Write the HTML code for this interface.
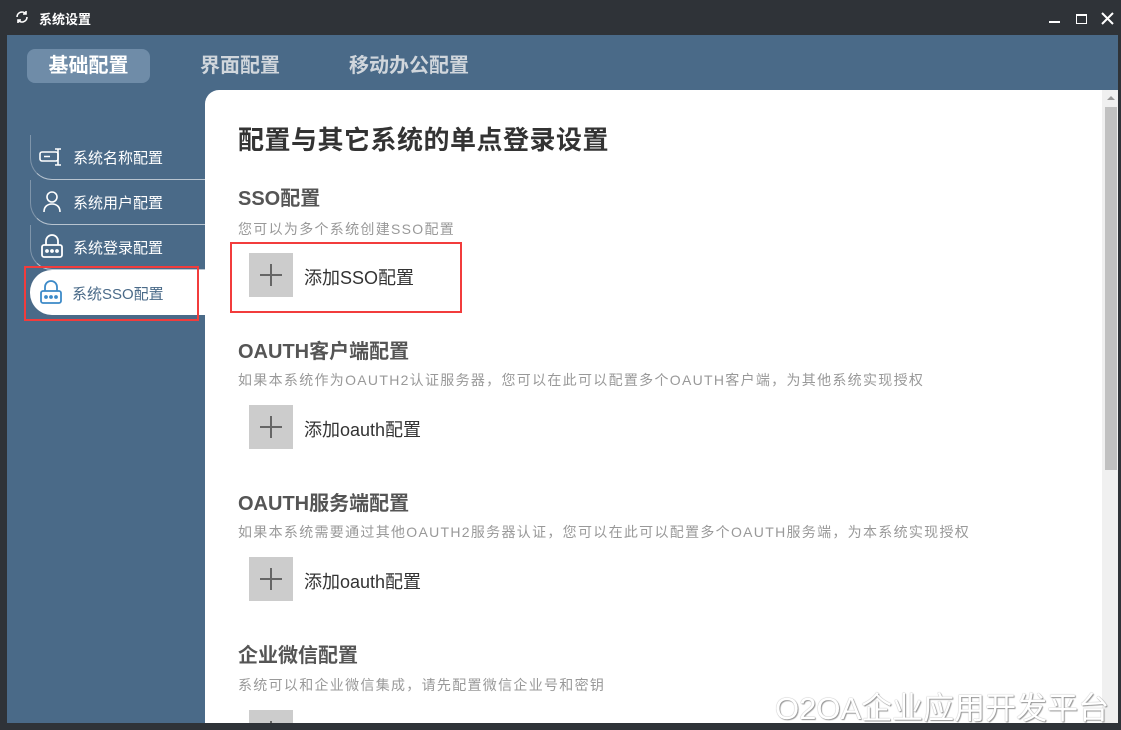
<!DOCTYPE html>
<html><head><meta charset="utf-8"><style>
*{margin:0;padding:0;box-sizing:border-box}
body{width:1121px;height:730px;background:#2f3338;position:relative;overflow:hidden;font-family:"Liberation Sans","Noto Sans CJK SC",sans-serif}
.abs{position:absolute}
.main{left:7px;top:35px;width:1111px;height:688px;background:#4a6a88}
.tab{top:49px;height:34px;line-height:34px;font-size:20px;font-weight:bold;color:#d0d6dc}
.menu{left:30px;width:175px;height:45px;border-bottom:1px solid #b8c4d0;border-left:1px solid #7f95aa;border-bottom-left-radius:22px;color:#fff;font-size:15px}
.menu span{position:absolute;left:42px;top:12px}
.panel{left:205px;top:90px;width:913px;height:633px;background:#fff;border-top-left-radius:14px;overflow:hidden}
.h{position:absolute;left:33px;font-size:20px;font-weight:bold;color:#555}
.d{position:absolute;left:33px;font-size:14px;color:#999;letter-spacing:1.3px;white-space:nowrap}
.b{position:absolute;left:44px;width:44px;height:44px;background:#ccc}
.b:before{content:"";position:absolute;left:11px;top:21px;width:22px;height:2px;background:#666}
.b:after{content:"";position:absolute;left:21px;top:11px;width:2px;height:22px;background:#666}
.bt{position:absolute;left:99px;font-size:18px;color:#333}
</style></head><body>
<svg class="abs" style="left:15px;top:10px" width="14" height="14" viewBox="0 0 14 14" fill="none" stroke="#fff" stroke-width="1.6"><path d="M2 7a5 5 0 0 1 9-3M12 7a5 5 0 0 1-9 3"/><path d="M11 1v3H8M3 13v-3h3"/></svg>
<div class="abs" style="left:39px;top:9px;color:#fff;font-size:13px;font-weight:bold">系统设置</div>
<div class="abs" style="left:1049px;top:21px;width:11px;height:2px;background:#fff"></div>
<div class="abs" style="left:1076px;top:14px;width:11px;height:10px;border:1.5px solid #fff;border-top-width:2.5px"></div>
<svg class="abs" style="left:1101px;top:12px" width="13" height="13" stroke="#fff" stroke-width="2"><path d="M1 1l11 11M12 1L1 12"/></svg>
<div class="abs main"></div>
<div class="abs tab" style="left:27px;width:123px;background:#6f8ca8;border-radius:8px;color:#fff;text-align:center">基础配置</div>
<div class="abs tab" style="left:200px">界面配置</div>
<div class="abs tab" style="left:349px">移动办公配置</div>
<div class="abs menu" style="top:135px"><svg class="abs" style="left:8px;top:12px" width="26" height="20" fill="none" stroke="#fff" stroke-width="1.6"><rect x="1" y="5" width="18" height="9" rx="2"/><path d="M5 9.5h6M16 2h6M19 2v16M16 18h6"/></svg><span>系统名称配置</span></div>
<div class="abs menu" style="top:180px"><svg class="abs" style="left:12px;top:11px" width="18" height="22" fill="none" stroke="#fff" stroke-width="1.6"><circle cx="9" cy="6" r="5"/><path d="M1 21c0-5 3-8 8-8s8 3 8 8"/></svg><span>系统用户配置</span></div>
<div class="abs menu" style="top:225px"><svg class="abs" style="left:10px;top:9px" width="22" height="24" fill="none" stroke="#fff" stroke-width="1.8"><path d="M5 11V7a6 6 0 0 1 12 0v4"/><rect x="1" y="11" width="20" height="12" rx="2"/><circle cx="6" cy="17" r="1" fill="#fff"/><circle cx="11" cy="17" r="1" fill="#fff"/><circle cx="16" cy="17" r="1" fill="#fff"/></svg><span>系统登录配置</span></div>
<div class="abs" style="left:30px;top:270px;width:175px;height:45px;background:#fff;border-radius:22px 0 0 22px;color:#4a6a88;font-size:15px"><svg class="abs" style="left:10px;top:10px" width="22" height="24" fill="none" stroke="#3d8ac8" stroke-width="1.8"><path d="M5 11V7a6 6 0 0 1 12 0v4"/><rect x="1" y="11" width="20" height="12" rx="2"/><circle cx="6" cy="17" r="1" fill="#3d8ac8"/><circle cx="11" cy="17" r="1" fill="#3d8ac8"/><circle cx="16" cy="17" r="1" fill="#3d8ac8"/></svg><span style="position:absolute;left:42px;top:13px">系统SSO配置</span></div>
<div class="abs" style="left:24px;top:266px;width:175px;height:55px;border:2px solid #f23c3c"></div>
<div class="abs panel">
<div style="position:absolute;left:33px;top:30px;font-size:26px;font-weight:bold;color:#333;letter-spacing:0.5px">配置与其它系统的单点登录设置</div>
<div class="h" style="top:92px">SSO配置</div>
<div class="d" style="top:129px">您可以为多个系统创建SSO配置</div>
<div class="b" style="top:163px"></div><div class="bt" style="top:174px">添加SSO配置</div>
<div class="h" style="top:245px">OAUTH客户端配置</div>
<div class="d" style="top:280px">如果本系统作为OAUTH2认证服务器，您可以在此可以配置多个OAUTH客户端，为其他系统实现授权</div>
<div class="b" style="top:315px"></div><div class="bt" style="top:326px">添加oauth配置</div>
<div class="h" style="top:397px">OAUTH服务端配置</div>
<div class="d" style="top:432px">如果本系统需要通过其他OAUTH2服务器认证，您可以在此可以配置多个OAUTH服务端，为本系统实现授权</div>
<div class="b" style="top:467px"></div><div class="bt" style="top:478px">添加oauth配置</div>
<div class="h" style="top:549px">企业微信配置</div>
<div class="d" style="top:585px">系统可以和企业微信集成，请先配置微信企业号和密钥</div>
<div class="b" style="top:620px"></div>
<div style="position:absolute;left:897px;top:0;width:16px;height:633px;background:#f0f0f0"></div>
<div style="position:absolute;left:900px;top:17px;width:12px;height:363px;background:#c1c1c1"></div>
<div style="position:absolute;left:902px;top:6px;border:4px solid transparent;border-bottom:4px solid #999;border-top:0"></div>
</div>
<div class="abs" style="left:230px;top:242px;width:232px;height:71px;border:2px solid #f23c3c"></div>
<div class="abs" style="left:775px;top:683px;font-size:31px;color:#fff;text-shadow:0 0 1px #888,1px 1px 1px #999;white-space:nowrap">O2OA企业应用开发平台</div>
</body></html>
